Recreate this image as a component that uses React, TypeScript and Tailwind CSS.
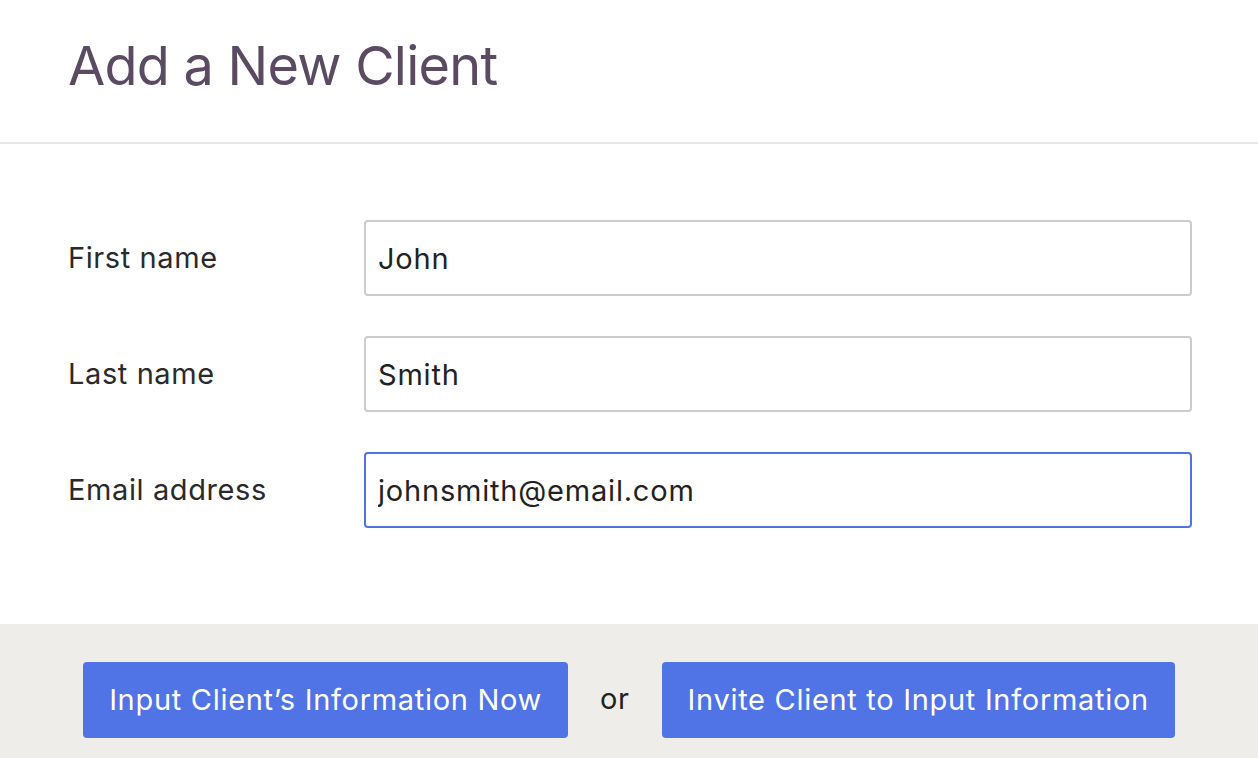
import React from "react";

const font = { fontFamily: "Inter, 'Noto Sans', sans-serif" };

function Row({ label, value, focused }: { label: string; value: string; focused?: boolean }) {
  return (
    <div className="flex items-center">
      <label className="w-[296px] shrink-0 text-[29px] tracking-[0.6px] text-[#2a2a2a]">{label}</label>
      <input
        readOnly
        value={value}
        className={`h-[76px] flex-1 rounded-[4px] border-2 bg-white px-[12px] text-[29px] tracking-[0.8px] text-[#222] outline-none ${
          focused ? "border-[#5272e4]" : "border-[#cccccc]"
        }`}
      />
    </div>
  );
}

export default function App() {
  return (
    <div className="min-h-[758px] w-full bg-white" style={font}>
      <div className="h-[144px] border-b-2 border-[#e6e6e6] px-[68px] pt-[28px]">
        <h1 className="text-[54px] leading-[76px] tracking-[-0.75px] text-[#5a4b62]">Add a New Client</h1>
      </div>
      <div className="flex flex-col gap-[40px] pl-[68px] pr-[66px] pb-[96px] pt-[76px]">
        <Row label="First name" value="John" />
        <Row label="Last name" value="Smith" />
        <Row label="Email address" value="johnsmith@email.com" focused />
      </div>
      <div className="flex h-[134px] items-start justify-center gap-[32px] bg-[#eeede9] pt-[38px]">
        <button className="h-[76px] rounded-[4px] bg-[#5073e5] px-[26px] text-[29px] tracking-[0.7px] text-white">
          Input Client’s Information Now
        </button>
        <span className="self-start pt-[15px] text-[29px] tracking-[0.6px] text-[#222]">or</span>
        <button className="h-[76px] rounded-[4px] bg-[#5073e5] px-[26px] text-[29px] tracking-[0.7px] text-white">
          Invite Client to Input Information
        </button>
      </div>
    </div>
  );
}
